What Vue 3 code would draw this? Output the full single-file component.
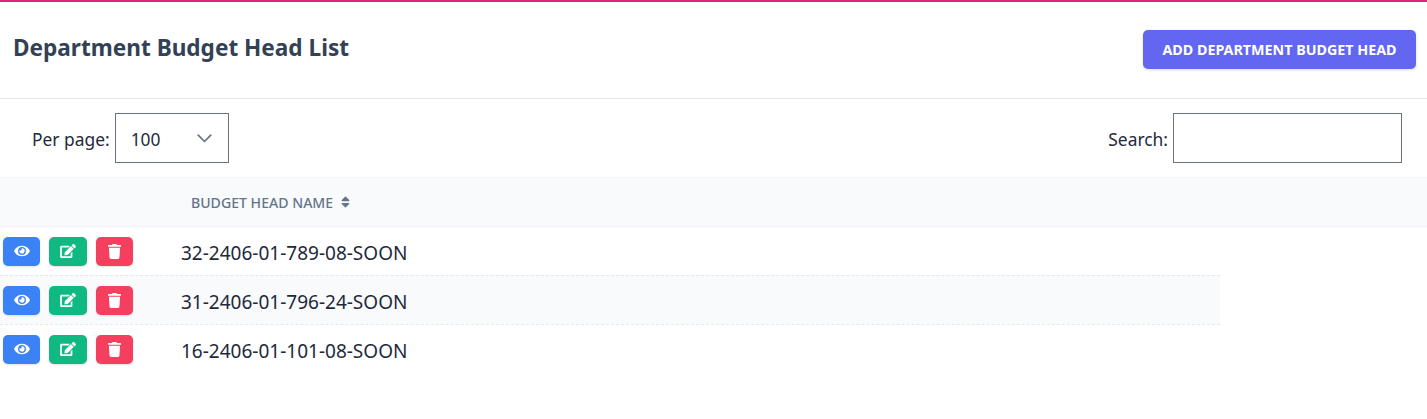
<template>
  <div class="page">
    <header class="head">
      <h1 class="title">Department Budget Head List</h1>
      <button class="add-btn">ADD DEPARTMENT BUDGET HEAD</button>
    </header>

    <div class="filters">
      <label class="field">
        <span class="label">Per page:</span>
        <span class="select">
          <span class="label">100</span>
          <svg class="chevron" viewBox="0 0 15 9" fill="none"><path d="M1.2 1.2l6.3 6.3 6.3-6.3" stroke="#6b7280" stroke-width="1.7" stroke-linecap="round" stroke-linejoin="round" /></svg>
        </span>
      </label>
      <label class="field">
        <span class="label">Search:</span>
        <input class="search" type="text" />
      </label>
    </div>

    <div class="thead">
      <span class="th">BUDGET HEAD NAME</span>
      <svg class="sort" viewBox="0 0 320 512"><path fill="#64748b" d="M41 288h238c21.4 0 32.1 25.9 17 41L177 448c-9.4 9.4-24.6 9.4-33.9 0L24 329c-15.1-15.1-4.4-41 17-41zm255-105L177 64c-9.4-9.4-24.6-9.4-33.9 0L24 183c-15.1 15.1-4.4 41 17 41h238c21.4 0 32.1-25.9 17-41z" /></svg>
    </div>

    <div class="rows">
      <div v-for="row in rows" :key="row" class="row">
        <div class="actions">
          <button class="act blue">
            <svg viewBox="0 0 576 512" class="ico"><path fill="#fff" d="M572.52 241.4C518.29 135.59 410.93 64 288 64S57.68 135.64 3.48 241.41a32.35 32.35 0 0 0 0 29.19C57.71 376.41 165.07 448 288 448s230.32-71.64 284.52-177.41a32.35 32.35 0 0 0 0-29.19zM288 400a144 144 0 1 1 144-144 143.93 143.93 0 0 1-144 144zm0-240a95.31 95.31 0 0 0-25.31 3.79 47.85 47.85 0 0 1-66.9 66.9A95.78 95.78 0 1 0 288 160z" /></svg>
          </button>
          <button class="act green">
            <svg viewBox="0 0 576 512" class="ico"><path fill="#fff" d="M402.6 83.2l90.2 90.2c3.8 3.8 3.8 10 0 13.8L274.4 405.6l-92.8 10.3c-12.4 1.4-22.9-9.1-21.5-21.5l10.3-92.8L388.8 83.2c3.8-3.8 10-3.8 13.8 0zm162-22.9l-48.8-48.8c-15.2-15.2-39.9-15.2-55.2 0l-35.4 35.4c-3.8 3.8-3.8 10 0 13.8l90.2 90.2c3.8 3.8 10 3.8 13.8 0l35.4-35.4c15.2-15.3 15.2-40 0-55.2zM384 346.2V448H64V128h229.8c3.2 0 6.2-1.3 8.5-3.5l40-40c7.6-7.6 2.2-20.5-8.5-20.5H48C21.5 64 0 85.5 0 112v352c0 26.5 21.5 48 48 48h352c26.5 0 48-21.5 48-48V306.2c0-10.7-12.9-16-20.5-8.5l-40 40c-2.2 2.3-3.5 5.3-3.5 8.5z" /></svg>
          </button>
          <button class="act red">
            <svg viewBox="0 0 448 512" class="ico trash"><path fill="#fff" d="M432 32H312l-9.4-18.7A24 24 0 0 0 281.1 0H166.8a23.72 23.72 0 0 0-21.4 13.3L136 32H16A16 16 0 0 0 0 48v32a16 16 0 0 0 16 16h416a16 16 0 0 0 16-16V48a16 16 0 0 0-16-16zM53.2 467a48 48 0 0 0 47.9 45h245.8a48 48 0 0 0 47.9-45L416 128H32z" /></svg>
          </button>
        </div>
        <div class="name">{{ row }}</div>
      </div>
    </div>
  </div>
</template>

<script setup>
const rows = [
  '32-2406-01-789-08-SOON',
  '31-2406-01-796-24-SOON',
  '16-2406-01-101-08-SOON'
]
</script>

<style>
html, body {
  background: #fff;
}
</style>

<style scoped>
.page {
  font-family: "Noto Sans", "Open Sans", sans-serif;
  color: #1e293b;
  border-top: 2px solid #db2777;
  height: 417px;
  overflow: hidden;
}
.head {
  height: 97px;
  box-sizing: border-box;
  border-bottom: 1px solid #e2e8f0;
  display: flex;
  justify-content: space-between;
  align-items: flex-start;
  padding: 28px 11px 0 13px;
}
.title {
  margin: 0;
  font-size: 22.6px;
  line-height: 36px;
  font-weight: 700;
  color: #334155;
}
.add-btn {
  width: 273px;
  height: 39px;
  border: 0;
  border-radius: 5px;
  background: #6366f1;
  color: #fff;
  font: 700 14.3px "Noto Sans", sans-serif;
  box-shadow: 0 1px 3px rgba(0, 0, 0, .15);
}
.filters {
  height: 78px;
  box-sizing: border-box;
  display: flex;
  justify-content: space-between;
  padding: 14px 25px 0 32px;
}
.field {
  display: flex;
  align-items: center;
  gap: 5px;
  height: 50px;
  font-size: 17.4px;
  color: #1e293b;
}
.label {
  padding-top: 2px;
}
.select {
  width: 114px;
  height: 50px;
  box-sizing: border-box;
  border: 1px solid #6b7280;
  display: flex;
  align-items: center;
  justify-content: space-between;
  padding: 0 16px 0 15px;
}
.chevron {
  width: 15px;
  height: 9px;
}
.search {
  width: 229px;
  height: 50px;
  box-sizing: border-box;
  border: 1px solid #6b7280;
  background: #fff;
  padding: 0;
}
.thead {
  height: 50px;
  box-sizing: border-box;
  background: #f8fafc;
  border-top: 1px solid #f1f5f9;
  border-bottom: 1px solid #f1f5f9;
  display: flex;
  align-items: center;
  padding-left: 191px;
  gap: 8px;
}
.th {
  font-size: 14.1px;
  font-weight: 500;
  color: #64748b;
}
.sort {
  width: 9px;
  height: 14px;
}
.rows {
  width: 1220px;
}
.row {
  height: 49px;
  box-sizing: border-box;
  display: flex;
  align-items: center;
  border-top: 1px dashed #e2e8f0;
}
.row:first-child {
  border-top: 0;
  height: 48px;
}
.row:nth-child(even) {
  background: #f8fafc;
}
.actions {
  display: flex;
  width: 181px;
  padding-left: 3px;
  box-sizing: border-box;
  gap: 9px;
  flex: none;
}
.act {
  width: 37px;
  height: 29px;
  border: 0;
  border-radius: 5px;
  padding: 0;
  display: flex;
  align-items: center;
  justify-content: center;
  box-shadow: 0 1px 2px rgba(0, 0, 0, .12);
}
.act.green {
  width: 38px;
}
.blue { background: #3b82f6; }
.green { background: #10b981; }
.red { background: #f43f5e; }
.ico {
  height: 14px;
  width: 16px;
}
.ico.trash {
  height: 15px;
  width: 13px;
}
.name {
  font-size: 19px;
  color: #1e293b;
  padding-top: 3px;
}
</style>
